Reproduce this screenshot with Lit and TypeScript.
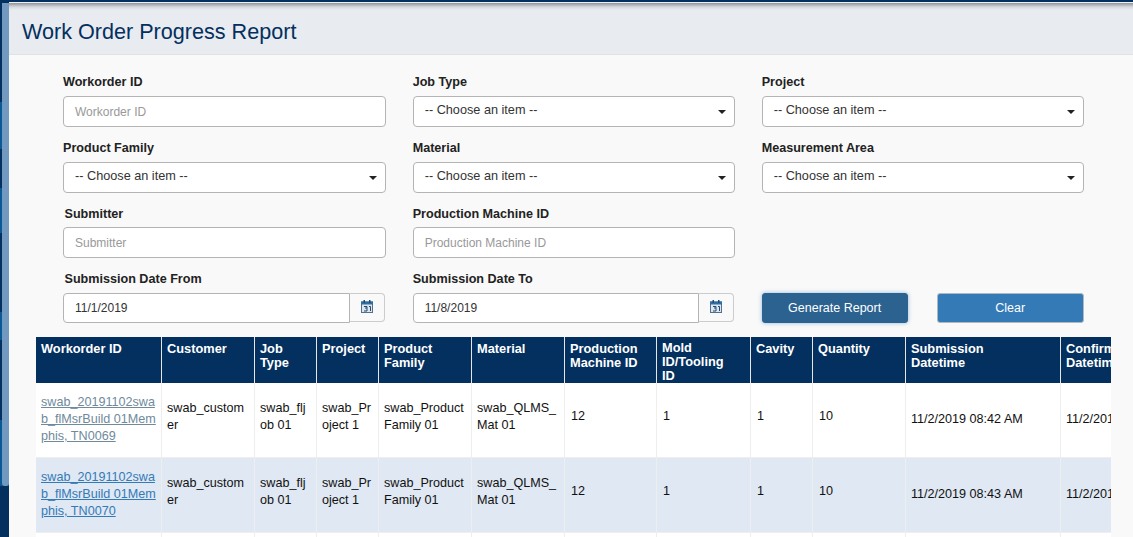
import { LitElement, html, css, nothing } from 'lit';
import { customElement } from 'lit/decorators.js';

const COLS = [126, 93, 62, 62, 93, 93, 92, 94, 62, 93, 155, 155];
const HEADS = [
  'Workorder ID', 'Customer', 'Job\nType', 'Project', 'Product\nFamily', 'Material',
  'Production\nMachine ID', 'Mold\nID/Tooling\nID', 'Cavity', 'Quantity',
  'Submission\nDatetime', 'Confirmed\nDatetime',
];
// the cells of the source sit at different heights per column
const CELL_CLS = ['link', 'text', 'text', 'text', 'text', 'text', 'num', 'num', 'num', 'num', 'when', 'when'];

const row = (id: string, time: string) => [
  id, 'swab_custom er', 'swab_flj ob 01', 'swab_Pr oject 1', 'swab_Product Family 01',
  'swab_QLMS_ Mat 01', '12', '1', '1', '10', time, '11/2/2019 08:44 AM',
];

const ROWS = [
  row('swab_20191102swa b_flMsrBuild 01Mem phis, TN0069', '11/2/2019 08:42 AM'),
  row('swab_20191102swa b_flMsrBuild 01Mem phis, TN0070', '11/2/2019 08:43 AM'),
];

@customElement('app-root')
export class AppRoot extends LitElement {
  static styles = css`
    :host {
      display: flex;
      height: 537px;
      overflow: hidden;
      font-family: 'Liberation Sans', Arial, sans-serif;
      font-size: 12.6px;
      color: #222;
      background: #f9f9f9;
    }
    .rail {
      width: 9px;
      flex: none;
      padding: 3px 0 0 2px;
      box-sizing: border-box;
      background: linear-gradient(
        #03305f 0 102px,
        #0a5a96 102px 149px,
        #03305f 149px 188px,
        #0a5a96 188px 233px,
        #03305f 233px 312px,
        #0a5a96 312px 340px,
        #03305f 340px 420px,
        #0a5a96 420px 486px,
        #03305f 486px
      );
    }
    .thumb {
      height: 483px;
      background: #7299bf;
      border-radius: 0 0 3px 3px;
    }
    .page {
      flex: 1;
      min-width: 0;
      display: flex;
      flex-direction: column;
    }
    .topline {
      height: 2px;
      flex: none;
      background: #03305f;
      border-bottom: 1px solid #eef0f2;
    }
    header {
      height: 52px;
      flex: none;
      box-sizing: border-box;
      padding: 15px 0 0 13px;
      background: linear-gradient(#8f9399 0, #d5d8dd 4px, #e8ebf0 7px);
      border-bottom: 1px solid #e0e3e6;
    }
    h1 {
      margin: 0;
      font-size: 21.6px;
      line-height: 28px;
      font-weight: 400;
      color: #03305f;
    }
    form {
      display: grid;
      grid-template-columns: 322.67px 322px 322px;
      column-gap: 27px;
      grid-template-rows: 66px 65px 66px 45px;
      padding: 19px 0 0 54px;
      height: 282px;
      box-sizing: border-box;
      flex: none;
    }
    .field {
      display: flex;
      flex-direction: column;
    }
    label {
      font-weight: 700;
      font-size: 12.6px;
      line-height: 16px;
      height: 22px;
      flex: none;
    }
    .indent label {
      padding-left: 1.5px;
    }
    .tight label {
      padding-top: 1px;
      height: 21px;
    }
    .box {
      height: 31px;
      flex: none;
      box-sizing: border-box;
      border: 1px solid #b4b4b4;
      border-radius: 4px;
      background: #fff;
      display: flex;
      align-items: center;
      justify-content: space-between;
      padding: 0 11px;
      font-size: 12px;
    }
    .placeholder {
      color: #999;
    }
    .select {
      color: #333;
      padding-bottom: 3px;
      font-size: 12.7px;
    }
    .caret {
      width: 0;
      height: 0;
      border-left: 4px solid transparent;
      border-right: 4px solid transparent;
      border-top: 4px solid #222;
      margin: 3px -3px 0 0;
    }
    .date {
      display: flex;
      margin-right: 1px;
    }
    .date .box {
      flex: 1;
      border-radius: 4px 0 0 4px;
      color: #333;
      height: 30px;
    }
    .cal {
      width: 35px;
      height: 29px;
      box-sizing: border-box;
      border: 1px solid #ccc;
      border-left: none;
      border-radius: 0 4px 4px 0;
      display: flex;
      align-items: center;
      justify-content: center;
      padding-bottom: 2px;
    }
    .actions {
      display: flex;
      justify-content: space-between;
      align-items: flex-start;
      padding-top: 22px;
      width: 322px;
    }
    button {
      width: 147px;
      height: 30px;
      border: 1px solid #b0b8c0;
      border-radius: 3px;
      color: #fff;
      font: inherit;
      font-size: 12.5px;
      background: #337ab7;
      padding: 0;
    }
    button.primary {
      width: 146px;
      background: #2b6290;
      border-color: #2b6290;
      box-shadow: 0 0 4px rgba(80, 140, 200, 0.6);
    }
    .table-wrap {
      margin-left: 27px;
      width: 1075px;
      overflow: hidden;
      flex: none;
    }
    table {
      border-collapse: separate;
      border-spacing: 0;
      table-layout: fixed;
      width: 1180px;
    }
    th {
      background: #03305f;
      color: #fff;
      font-size: 12.8px;
      line-height: 14px;
      text-align: left;
      vertical-align: top;
      white-space: pre-line;
      padding: 5px 5px 0;
      height: 46px;
      box-sizing: border-box;
      border-right: 1px solid #e6e6e6;
    }
    th:nth-child(8) {
      padding-top: 4px;
    }
    td {
      height: 75px;
      box-sizing: border-box;
      padding: 0 5px;
      font-size: 12.6px;
      line-height: 17px;
      color: #111;
      word-break: break-word;
      border-right: 1px solid #eee;
      border-bottom: 1px solid #eee;
      background: #fff;
    }
    td.link {
      padding-bottom: 1px;
    }
    td.text {
      padding-bottom: 7px;
    }
    td.num {
      padding-left: 6px;
      padding-bottom: 8px;
    }
    td.when {
      padding-bottom: 2px;
    }
    tr.alt td {
      background: #dfe8f3;
    }
    a {
      color: #6f8a9c;
      text-decoration: underline;
    }
    tr.alt a {
      color: #337ab7;
    }
  `;

  field(name: string, kind: 'text' | 'select', cls = '') {
    return html`<div class="field ${cls}">
      <label>${name}</label>
      ${kind === 'text'
        ? html`<div class="box placeholder">${name}</div>`
        : html`<div class="box select">-- Choose an item --<span class="caret"></span></div>`}
    </div>`;
  }

  dateField(name: string, value: string, cls = '') {
    return html`<div class="field ${cls}">
      <label>${name}</label>
      <div class="date">
        <div class="box">${value}</div>
        <div class="cal">
          <svg width="12" height="13" viewBox="0 0 12 13">
            <rect x="0.5" y="2" width="11" height="10.5" fill="#dce6ee" stroke="#54708e" />
            <rect x="0" y="1.5" width="12" height="3" fill="#2f6ea5" />
            <rect x="2.5" y="0" width="1.5" height="3" fill="#27496d" />
            <rect x="8" y="0" width="1.5" height="3" fill="#27496d" />
            <path d="M3 6.5h3v1.5H4M6 8v3H3M8 6.5h1.5V11" fill="none" stroke="#27496d" />
          </svg>
        </div>
      </div>
    </div>`;
  }

  render() {
    return html`
      <div class="rail"><div class="thumb"></div></div>
      <div class="page">
        <div class="topline"></div>
        <header><h1>Work Order Progress Report</h1></header>
        <form>
          ${this.field('Workorder ID', 'text')}
          ${this.field('Job Type', 'select')}
          ${this.field('Project', 'select')}
          ${this.field('Product Family', 'select')}
          ${this.field('Material', 'select')}
          ${this.field('Measurement Area', 'select')}
          ${this.field('Submitter', 'text', 'indent tight')}
          ${this.field('Production Machine ID', 'text', 'tight')}
          <div></div>
          ${this.dateField('Submission Date From', '11/1/2019', 'indent')}
          ${this.dateField('Submission Date To', '11/8/2019')}
          <div class="actions">
            <button type="button" class="primary">Generate Report</button>
            <button type="button">Clear</button>
          </div>
        </form>
        <div class="table-wrap">
          <table>
            <colgroup>${COLS.map((w) => html`<col style="width:${w}px" />`)}</colgroup>
            <thead>
              <tr>${HEADS.map((h) => html`<th>${h}</th>`)}</tr>
            </thead>
            <tbody>
              ${ROWS.map(
                (r, i) => html`<tr class=${i % 2 ? 'alt' : nothing}>
                  ${r.map(
                    (c, j) =>
                      html`<td class=${CELL_CLS[j]}>${j === 0 ? html`<a href="#">${c}</a>` : c}</td>`,
                  )}
                </tr>`,
              )}
              <tr>${COLS.map(() => html`<td></td>`)}</tr>
            </tbody>
          </table>
        </div>
      </div>
    `;
  }
}
